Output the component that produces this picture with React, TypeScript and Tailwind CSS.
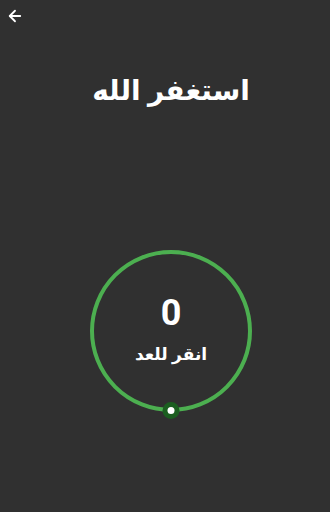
import { ArrowLeft } from "lucide-react";

export default function App() {
  return (
    <div
      className="flex h-[512px] w-[330px] flex-col items-center bg-[#303030] pl-[12px] text-white"
      style={{ fontFamily: "'Noto Sans', 'DejaVu Sans', sans-serif" }}
    >
      <div className="-ml-[12px] flex h-[31px] w-[330px] items-center px-[6px]">
        <ArrowLeft className="h-[18px] w-[18px]" strokeWidth={2.4} />
      </div>
      <h1 dir="rtl" className="mt-[44px] text-[28px] font-bold leading-none">
        استغفر الله
      </h1>
      <div className="relative mt-[147px] flex h-[162px] w-[162px] flex-col items-center justify-center rounded-full border-4 border-[#4caf50]">
        <span className="mt-[-6px] text-[36px] font-bold leading-none" style={{ fontFamily: "Roboto, sans-serif" }}>
          0
        </span>
        <span dir="rtl" className="mt-[14px] text-[17px] font-bold leading-none">
          انقر للعد
        </span>
        <div className="absolute bottom-[-11px] left-1/2 flex h-[17px] w-[17px] -translate-x-1/2 items-center justify-center rounded-full bg-[#1b5e20]">
          <div className="h-[7px] w-[7px] rounded-full bg-white" />
        </div>
      </div>
    </div>
  );
}
